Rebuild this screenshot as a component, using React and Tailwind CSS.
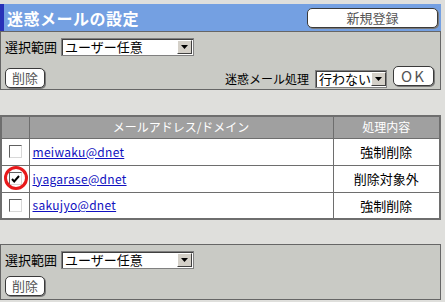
import React from 'react';

const jp = { fontFamily: '"Noto Sans CJK JP", "Noto Sans", sans-serif' };

function Select({ value, width }) {
    return (
        <div className={`flex items-center h-[18px] bg-white border border-[#808080] shadow-[inset_1px_1px_0_#404040] ${width}`}>
            <span className="flex-1 pl-[3px] text-[13px] leading-[16px] text-black whitespace-nowrap">{value}</span>
            <span className="shrink-0 w-[15px] h-[14px] mr-[1px] flex items-center justify-center bg-[#d4d0c8] border border-t-white border-l-white border-r-[#404040] border-b-[#404040]">
                <svg width="7" height="4" viewBox="0 0 7 4"><path d="M0 0h7L3.5 4z" fill="#000" /></svg>
            </span>
        </div>
    );
}

function Btn({ children, className }) {
    return (
        <button className={`flex items-center justify-center bg-white border border-[#3a3a3a] rounded-[5px] shadow-[1px_1px_0_#7a7a7a] text-[13px] leading-none text-[#555] ${className}`}>
            {children}
        </button>
    );
}

function Box({ checked }) {
    return (
        <span className="w-[13px] h-[13px] bg-white border border-t-[#606060] border-l-[#606060] border-r-[#d8d8d8] border-b-[#d8d8d8] flex items-center justify-center">
            {checked && (
                <svg width="9" height="8" viewBox="0 0 9 8"><path d="M1 4l2.2 2.4L8 1" stroke="#000" strokeWidth="2" fill="none" /></svg>
            )}
        </span>
    );
}

const rows = [
    { mail: 'meiwaku@dnet', action: '強制削除' },
    { mail: 'iyagarase@dnet', action: '削除対象外', checked: true },
    { mail: 'sakujyo@dnet', action: '強制削除' },
];

export default function App() {
    return (
        <div className="w-[445px] h-[302px] bg-[#dfdfdc] pt-[4px] overflow-hidden" style={jp}>
            <div className="w-[441px]">
                <div className="h-[27px] flex items-center justify-between bg-[#74a0e2] border-l-[4px] border-[#2831b8] pl-[3px] pr-[3px]">
                    <span className="text-white text-[16px] font-bold leading-none tracking-[0.5px]">迷惑メールの設定</span>
                    <Btn className="w-[131px] h-[20px]">新規登録</Btn>
                </div>
                <div className="h-[59px] bg-[#c9cac5] border border-[#666] px-[4px] pt-[5px]">
                    <div className="flex items-center gap-[4px]">
                        <span className="text-[13px] text-black">選択範囲</span>
                        <Select value="ユーザー任意" width="w-[133px]" />
                    </div>
                    <div className="flex items-end justify-between mt-[9px]">
                        <Btn className="w-[40px] h-[20px]">削除</Btn>
                        <div className="flex items-end gap-[6px] pr-[2px]">
                            <span className="text-[12px] text-black leading-none mb-[3px] whitespace-nowrap">迷惑メール処理</span>
                            <Select value="行わない" width="w-[72px]" />
                            <Btn className="w-[41px] h-[20px] mb-[2px] text-[15px] tracking-[2px]">OK</Btn>
                        </div>
                    </div>
                </div>

                <table className="mt-[25px] w-[441px] border-collapse border-2 border-[#6e6e6e] bg-white text-[12px]">
                    <thead>
                        <tr className="h-[22px] bg-[#a0a0a0] text-white">
                            <th className="w-[28px] border border-[#6e6e6e]"></th>
                            <th className="font-normal border border-[#6e6e6e]">メールアドレス/ドメイン</th>
                            <th className="w-[107px] font-normal border border-[#6e6e6e]">処理内容</th>
                        </tr>
                    </thead>
                    <tbody>
                        {rows.map((r) => (
                            <tr key={r.mail} className="h-[27px]">
                                <td className="border border-[#6e6e6e]">
                                    <div className="relative flex justify-center">
                                        <Box checked={r.checked} />
                                        {r.checked && (
                                            <span className="absolute left-[2px] top-[-6px] w-[24px] h-[24px] rounded-full border-[3px] border-[#e8191b]" />
                                        )}
                                    </div>
                                </td>
                                <td className="border border-[#6e6e6e] pl-[3px]">
                                    <a className="text-[#1010c0] underline text-[12px] tracking-[0.3px]" href="#">{r.mail}</a>
                                </td>
                                <td className="border border-[#6e6e6e] text-center text-black text-[13px]">{r.action}</td>
                            </tr>
                        ))}
                    </tbody>
                </table>

                <div className="mt-[24px] h-[56px] bg-[#c9cac5] border border-[#666] px-[4px] pt-[5px]">
                    <div className="flex items-center gap-[4px]">
                        <span className="text-[13px] text-black">選択範囲</span>
                        <Select value="ユーザー任意" width="w-[133px]" />
                    </div>
                    <div className="mt-[6px]">
                        <Btn className="w-[40px] h-[20px]">削除</Btn>
                    </div>
                </div>
            </div>
        </div>
    );
}
